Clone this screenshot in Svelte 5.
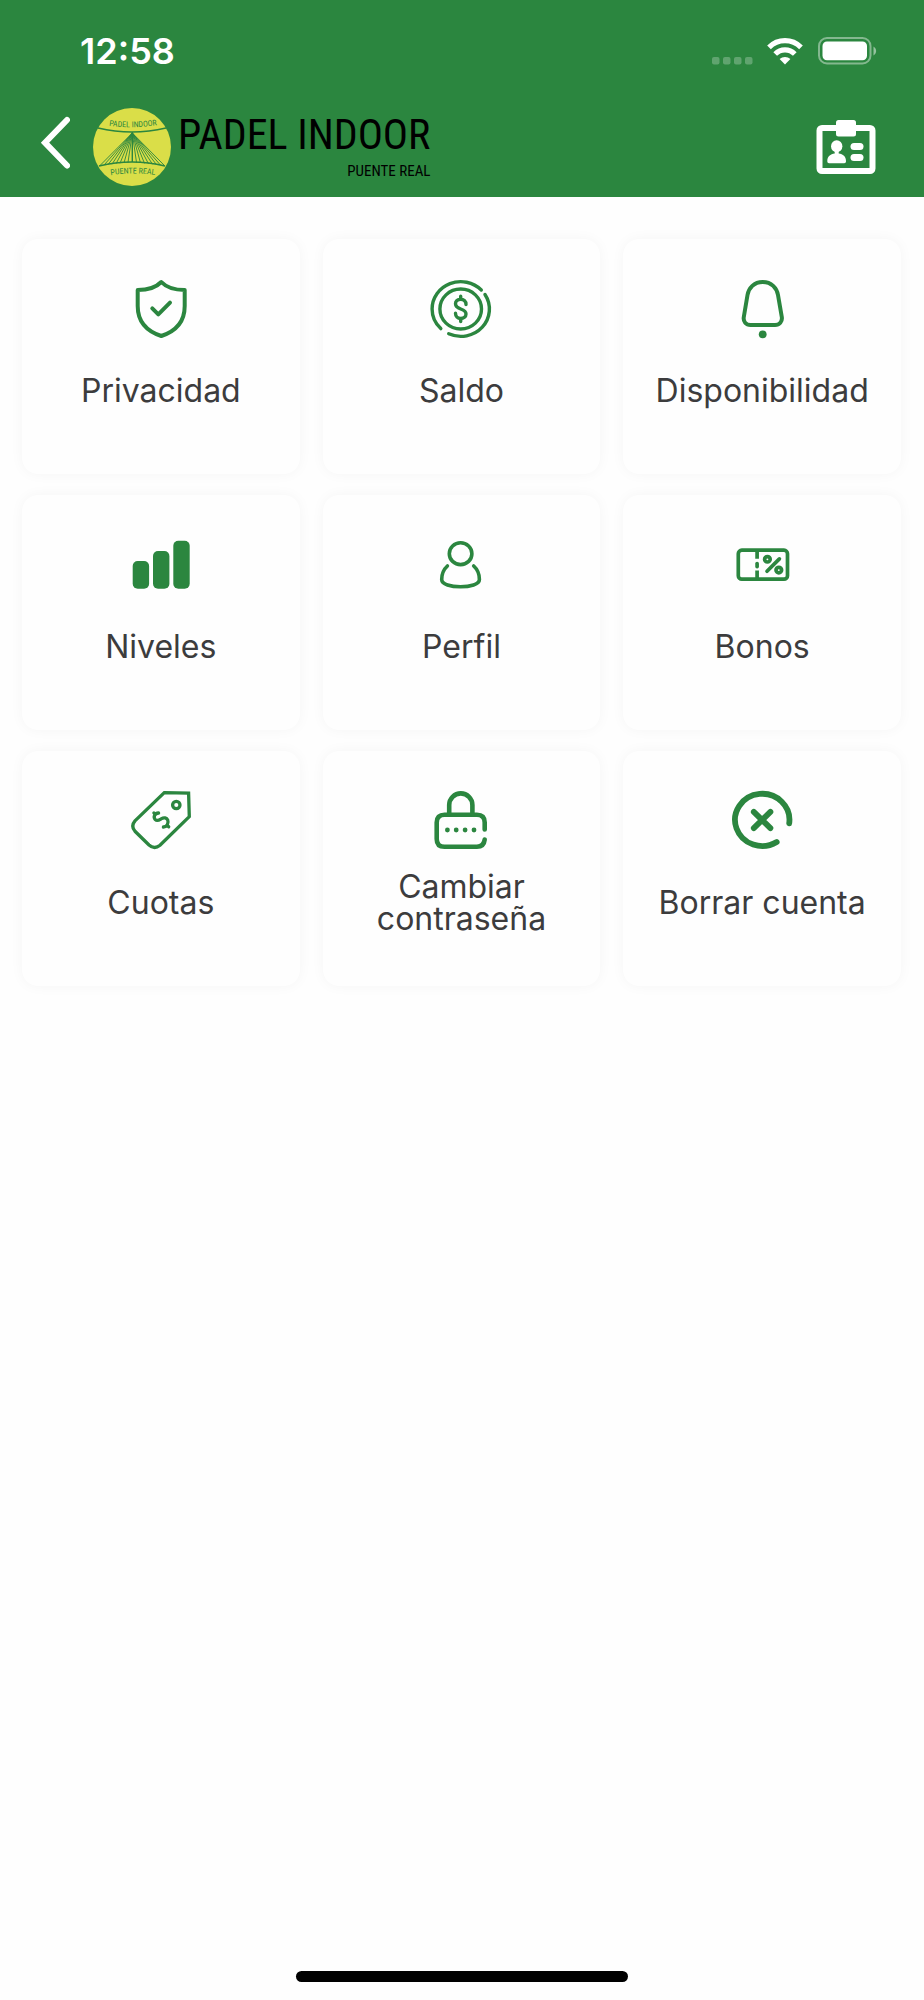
<script>
  const cables = [7, 11, 15, 19, 23, 27, 31, 35, 43.5, 47.5, 51.5, 55.5, 59.5, 63.5, 67.5, 71.5];

  const items = [
    { id: 'privacidad', label: 'Privacidad' },
    { id: 'saldo', label: 'Saldo' },
    { id: 'disponibilidad', label: 'Disponibilidad' },
    { id: 'niveles', label: 'Niveles' },
    { id: 'perfil', label: 'Perfil' },
    { id: 'bonos', label: 'Bonos' },
    { id: 'cuotas', label: 'Cuotas' },
    { id: 'contrasena', label: 'Cambiar contraseña' },
    { id: 'borrar', label: 'Borrar cuenta' }
  ];
</script>

<div class="screen">
  <header>
    <div class="status">
      <time>12:58</time>
      <div class="indicators">
        <svg class="signal" width="41" height="28" viewBox="0 0 41 28" aria-hidden="true">
          <g fill="#fff" opacity=".25">
            <rect x="0" y="20" width="7.5" height="7.5" rx="2" />
            <rect x="11" y="20" width="7.5" height="7.5" rx="2" />
            <rect x="22" y="20" width="7.5" height="7.5" rx="2" />
            <rect x="33" y="20" width="7.5" height="7.5" rx="2" />
          </g>
        </svg>
        <svg class="wifi" width="36" height="28" viewBox="0 0 36 28" aria-hidden="true">
          <path fill="none" stroke="#fff" stroke-width="5.2" d="M2 10.3C11 1.4 25 1.4 34 10.3M8.2 17C13.7 11.5 22.3 11.5 27.8 17" />
          <path fill="#fff" d="M18 27.5 12.6 22C15.6 19.2 20.4 19.2 23.4 22Z" />
        </svg>
        <svg width="60" height="28" viewBox="0 0 60 28" aria-hidden="true">
          <rect x="1" y="1" width="51.5" height="25.5" rx="8" fill="none" stroke="#fff" stroke-width="2" opacity=".42" />
          <rect x="4.5" y="4.5" width="44.5" height="18.7" rx="4.5" fill="#fff" />
          <path d="M55.5 9.5C59 11.5 59 16.5 55.5 18.5Z" fill="#fff" opacity=".5" />
        </svg>
      </div>
    </div>
    <nav>
      <button class="back" aria-label="Volver">
        <svg width="30" height="62" viewBox="0 0 30 62" aria-hidden="true">
          <path d="M27 4 5 26.7 27 49.5" fill="none" stroke="#fff" stroke-width="6" stroke-linecap="round" stroke-linejoin="miter" />
        </svg>
      </button>
      <a class="brand" href="#inicio">
        <svg class="mark" width="78" height="78" viewBox="0 0 78 78">
          <defs>
            <path id="arc-top" d="M14 17.4Q39 21.4 66 16.8" />
            <path id="arc-bottom" d="M14 67.8Q39 63.4 66 67.6" />
          </defs>
          <circle cx="39" cy="39" r="39" fill="#dade48" />
          <g fill="none" stroke="#2b863f">
            <path stroke-width="1.6" d="M5 20Q39 28 73 20M6 58Q39 50 72 58" />
            <path stroke-width="1.4" d="M39.3 24V54" />
            {#each cables as x}
              <path stroke-width=".9" d="M39.3 25 {x} {54 + Math.abs(x - 39) * 0.11}" />
            {/each}
          </g>
          <g class="mark-text">
            <text><textPath href="#arc-top" startOffset="50%" text-anchor="middle">PADEL INDOOR</textPath></text>
            <text><textPath href="#arc-bottom" startOffset="50%" text-anchor="middle">PUENTE REAL</textPath></text>
          </g>
        </svg>
        <span class="wordmark">
          <span class="name">PADEL INDOOR</span>
          <span class="place">PUENTE REAL</span>
        </span>
      </a>
      <button class="card-id" aria-label="Carnet">
        <svg width="60" height="56" viewBox="0 0 60 56" aria-hidden="true">
          <rect x="3.5" y="9" width="53" height="43" rx="2.5" fill="none" stroke="#fff" stroke-width="6" />
          <rect x="20" y="1" width="20" height="16.5" rx="2.5" fill="#fff" />
          <g fill="#fff">
            <ellipse cx="20.7" cy="27.3" rx="5.7" ry="6" />
            <path d="M18.7 30H22.7V34.5C27 35 30 37.5 30 42V42.5Q30 44.2 28.3 44.2H13Q11.3 44.2 11.3 42.5V42C11.3 37.5 14.4 35 18.7 34.5Z" />
            <rect x="34.5" y="24" width="13" height="7" rx="3.5" />
            <rect x="34.5" y="35" width="13" height="7" rx="3.5" />
          </g>
        </svg>
      </button>
    </nav>
  </header>

  <main>
    {#each items as item (item.id)}
      <button class="tile">
        <svg class="icon" width="60" height="60" viewBox="0 0 60 60" aria-hidden="true">
          {#if item.id === 'privacidad'}
            <path d="M30.3 3C25 8.5 17 11 6.7 11V27C6.7 42 15 52 30.3 57C45.5 52 53.7 42 53.7 27V11C43.7 11 35.5 8.5 30.3 3ZM21.3 29.3 27.3 35.3 39 23.7" />
          {:else if item.id === 'saldo'}
            <g stroke-width="3.4">
              <path d="M50.3 11A28.6 27.3 0 0 0 1.1 30A28.6 27.3 0 0 0 9.8 49.6M54 15.5A28.6 27.3 0 0 1 17.7 54.8" />
              <ellipse cx="29.7" cy="30" rx="20.8" ry="20" />
              <path d="M35 25.5C35 22 32.5 20.3 29.7 20.3C26.5 20.3 24.5 22.3 24.5 24.8C24.5 27.5 26.5 28.8 29.7 30C33 31.2 35 32.5 35 35C35 37.7 32.7 39.5 29.7 39.5C26.7 39.5 24.5 37.5 24.5 34.3M29.7 17.3V20M29.7 40V42.5" />
            </g>
          {:else if item.id === 'disponibilidad'}
            <path d="M30.7 3C22 3 16.7 9 15.5 16L11.8 38C11 42.5 14 46 18.5 46H43C47.5 46 50.5 42.5 49.8 38L46 16C44.8 9 39.5 3 30.7 3Z" />
            <circle class="solid" cx="30.7" cy="55.3" r="3.9" />
          {:else if item.id === 'niveles'}
            <g class="solid">
              <rect x="1.7" y="26" width="16.4" height="27.7" rx="5" />
              <rect x="22" y="16" width="16.4" height="37.7" rx="5" />
              <rect x="42.3" y="5.7" width="16.4" height="48" rx="5" />
            </g>
          {:else if item.id === 'perfil'}
            <g stroke-width="3.6">
              <ellipse cx="29.6" cy="18.7" rx="11.3" ry="10.9" />
              <path d="M16.4 31C12.5 34.5 10.7 40 10.7 44.5C10.7 49.5 20 51.8 29.5 51.8C39 51.8 48.4 49.5 48.4 44.5C48.4 40 46.6 34.5 42.7 31" />
            </g>
          {:else if item.id === 'bonos'}
            <g stroke-width="3.7">
              <rect x="6.3" y="15.2" width="49.2" height="29" rx="3.5" />
              <path stroke-linecap="butt" d="M25.1 16V23.8M25.1 35.5V44" />
              <path d="M25.1 28.6V31.6" />
              <path d="M47.4 23.9 35 36.3" />
              <ellipse cx="35.4" cy="24.3" rx="2.8" ry="2.7" />
              <ellipse cx="46.8" cy="35.1" rx="2.8" ry="2.7" />
            </g>
          {:else if item.id === 'cuotas'}
            <g stroke-width="3.3">
              <path stroke-linejoin="miter" d="M33.3 1.6 57.6 2.2 58.3 25.6 29 54.3Q23.3 58.8 18 54L4 40.3Q-.5 35 4 29.8Z" />
              <circle cx="45.3" cy="14" r="3.7" />
              <path d="M22.9 21.9 24.3 23.3M27.6 22C23.5 22.3 22 26 24.3 28.6C26.3 30.6 28.5 28.8 30.5 27.6C33 26.2 35.6 26.8 36.7 29C37.8 31.8 36.3 35.7 32.4 36M36.2 34.4 37.7 35.8" />
            </g>
          {:else if item.id === 'contrasena'}
            <g stroke-width="4.6">
              <path d="M53.7 38.5V31.5Q53.7 23.7 45.9 23.7H13.5Q5.7 23.7 5.7 31.5V47.9Q5.7 55.7 13.5 55.7H45.9Q53 55.7 53.7 48.5" />
              <path d="M18.2 23V14A11.6 11.6 0 0 1 41.4 14V23" />
            </g>
            <g class="solid">
              <circle cx="16.4" cy="39" r="2.4" />
              <circle cx="25.2" cy="39" r="2.4" />
              <circle cx="34.1" cy="39" r="2.4" />
              <circle cx="43" cy="39" r="2.4" />
            </g>
          {:else}
            <g stroke-width="5.8">
              <path d="M57.2 32.3A27.2 26.1 0 1 0 44.7 51" />
              <path d="M21.8 20.9 38.4 37.1M38.4 20.9 21.8 37.1" />
            </g>
          {/if}
        </svg>
        <span class="label">{item.label}</span>
      </button>
    {/each}
  </main>

  <div class="home"></div>
</div>

<style>
  :global(body) {
    margin: 0;
    background: #fefefe;
  }

  .screen {
    display: flex;
    flex-direction: column;
    min-height: 100vh;
    font-family: Inter, 'Open Sans', sans-serif;
    color: #3c3c3d;
  }

  button {
    padding: 0;
    border: 0;
    background: none;
    font: inherit;
    color: inherit;
    cursor: pointer;
  }

  svg {
    display: block;
    flex: none;
  }

  header {
    background: #2b863f;
    color: #fff;
  }

  .status {
    display: flex;
    align-items: center;
    justify-content: space-between;
    height: 101px;
    padding: 0 46px 0 80px;
  }

  time {
    font-size: 36px;
    font-weight: 600;
    line-height: 44px;
  }

  .indicators {
    display: flex;
  }

  .signal {
    margin-right: 14px;
  }

  .wifi {
    margin-right: 15px;
  }

  nav {
    display: flex;
    align-items: center;
    height: 92px;
    padding: 0 48px 4px 40px;
  }

  .brand {
    display: flex;
    align-items: center;
    gap: 7px;
    margin-left: 23px;
    color: #000;
    text-decoration: none;
    font-family: 'Liberation Sans Narrow', 'Roboto Condensed', 'Liberation Sans', sans-serif;
  }

  .mark-text {
    fill: #2b863f;
    font-size: 8px;
  }

  .wordmark {
    display: flex;
    flex-direction: column;
    align-items: flex-end;
  }

  .name {
    font-size: 42px;
    line-height: 48px;
    white-space: nowrap;
  }

  .place {
    font-size: 15px;
    line-height: 24px;
  }

  .card-id {
    margin-left: auto;
  }

  main {
    display: grid;
    grid-template-columns: repeat(3, 1fr);
    gap: 21px 23px;
    padding: 42px 23px 42px 22px;
  }

  .tile {
    display: flex;
    flex-direction: column;
    align-items: center;
    gap: 20px;
    padding: 40px 16px 51px;
    border-radius: 16px;
    background: #fefefe;
    box-shadow: 0 0 14px rgba(0, 0, 0, 0.04);
  }

  .icon {
    overflow: visible;
    fill: none;
    stroke: #2b863f;
    stroke-width: 4;
    stroke-linecap: round;
    stroke-linejoin: round;
  }

  .solid {
    fill: #2b863f;
    stroke: none;
  }

  .label {
    display: flex;
    align-items: center;
    min-height: 64px;
    font-size: 32px;
    font-weight: 400;
    line-height: 32px;
    text-align: center;
  }

  .home {
    width: 36%;
    height: 11px;
    margin: auto auto 18px;
    border-radius: 6px;
    background: #000;
  }
</style>
